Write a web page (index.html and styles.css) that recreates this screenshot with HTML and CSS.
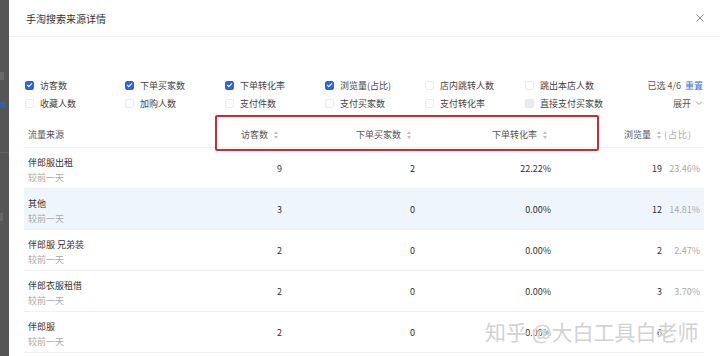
FILE: index.html
```html
<!DOCTYPE html>
<html lang="zh-CN">
  <head>
    <meta charset="UTF-8" />
    <meta name="viewport" content="width=device-width, initial-scale=1.0" />
    <title>手淘搜索来源详情</title>
    <link rel="stylesheet" href="styles.css">
  </head>
  <body>
    <div class="backdrop">
      <span class="bd-text"></span>
      <span class="bd-check"></span>
      <span class="bd-line"></span>
      <span class="bd-text bd-low"></span>
    </div>

    <div class="drawer">
      <div class="drawer-header">
        <span class="drawer-title">手淘搜索来源详情</span>
        <svg class="close-btn" width="8" height="8" viewBox="0 0 8 8"><path d="M0.5 0.5 L7.5 7.5 M7.5 0.5 L0.5 7.5" stroke="#8a8a8a" stroke-width="1"/></svg>
      </div>

      <div class="filters">
        <div class="filter-grid">
          <label class="check"><span class="box on"></span>访客数</label>
          <label class="check"><span class="box on"></span>下单买家数</label>
          <label class="check"><span class="box on"></span>下单转化率</label>
          <label class="check"><span class="box on"></span>浏览量(占比)</label>
          <label class="check"><span class="box"></span>店内跳转人数</label>
          <label class="check"><span class="box"></span>跳出本店人数</label>
          <label class="check"><span class="box"></span>收藏人数</label>
          <label class="check"><span class="box"></span>加购人数</label>
          <label class="check"><span class="box"></span>支付件数</label>
          <label class="check"><span class="box"></span>支付买家数</label>
          <label class="check"><span class="box"></span>支付转化率</label>
          <label class="check"><span class="box disabled"></span>直接支付买家数</label>
        </div>
        <div class="filter-side">
          <div class="picked">已选 4/6 <a class="link">重置</a></div>
          <div class="expand">展开
            <svg width="8" height="6" viewBox="0 0 8 6"><path d="M1 1.5 L4 4.5 L7 1.5" fill="none" stroke="#999" stroke-width="1"/></svg>
          </div>
        </div>
      </div>

      <div class="data-table">
        <div class="tr head">
          <div class="td name">流量来源</div>
          <div class="td num">访客数 <span class="sorter"></span></div>
          <div class="td num">下单买家数 <span class="sorter"></span></div>
          <div class="td num">下单转化率 <span class="sorter"></span></div>
          <div class="td num">浏览量 <span class="sorter"></span><span class="pct head-pct">(占比)</span></div>
        </div>

        <div class="tr">
          <div class="td name"><div>伴郎服出租</div><div class="sub">较前一天</div></div>
          <div class="td num">9</div>
          <div class="td num">2</div>
          <div class="td num">22.22%</div>
          <div class="td num">19<span class="pct">23.46%</span></div>
        </div>
        <div class="tr hover">
          <div class="td name"><div>其他</div><div class="sub">较前一天</div></div>
          <div class="td num">3</div>
          <div class="td num">0</div>
          <div class="td num">0.00%</div>
          <div class="td num">12<span class="pct">14.81%</span></div>
        </div>
        <div class="tr">
          <div class="td name"><div>伴郎服 兄弟装</div><div class="sub">较前一天</div></div>
          <div class="td num">2</div>
          <div class="td num">0</div>
          <div class="td num">0.00%</div>
          <div class="td num">2<span class="pct">2.47%</span></div>
        </div>
        <div class="tr">
          <div class="td name"><div>伴郎衣服租借</div><div class="sub">较前一天</div></div>
          <div class="td num">2</div>
          <div class="td num">0</div>
          <div class="td num">0.00%</div>
          <div class="td num">3<span class="pct">3.70%</span></div>
        </div>
        <div class="tr">
          <div class="td name"><div>伴郎服</div><div class="sub">较前一天</div></div>
          <div class="td num">2</div>
          <div class="td num">0</div>
          <div class="td num">0.00%</div>
          <div class="td num">6<span class="pct"></span></div>
        </div>
      </div>

      <!-- annotation drawn over the sortable headers -->
      <div class="mark-box"></div>
      <div class="watermark">知乎 @大白工具白老师</div>
    </div>
  </body>
</html>
```

FILE: styles.css
```css
* {
  margin: 0;
  padding: 0;
  box-sizing: border-box;
}

body {
  display: flex;
  height: 356px;
  overflow: hidden;
  background-color: #fff;
  font-family: "Noto Sans CJK SC", "Noto Sans", sans-serif;
  color: #333;
  font-size: 9px;
}

.backdrop {
  width: 9px;
  background-color: #555;
  display: flex;
  flex-direction: column;
}

.bd-text {
  margin-top: 72px;
  width: 4px;
  height: 8px;
  background-color: #686868;
}

.bd-check {
  margin-top: 22px;
  width: 6px;
  height: 6px;
  background-color: #3b5f9e;
}

.bd-line {
  margin-top: 44px;
  height: 1px;
  background-color: #646464;
}

.bd-low {
  margin-top: 60px;
  width: 3px;
}

.drawer {
  flex: 1;
  position: relative;
  background-color: #fff;
}

.drawer-header {
  height: 37px;
  border-bottom: 1px solid #f0f0f0;
  display: flex;
  align-items: center;
  justify-content: space-between;
  padding: 0 16px 0 17px;
}

.drawer-title {
  font-size: 10px;
  color: #333;
}

.filters {
  display: flex;
  padding: 39px 17px 0 16px;
}

.filter-grid {
  display: grid;
  grid-template-columns: repeat(6, 100px);
  grid-auto-rows: 18px;
}

.check {
  display: flex;
  align-items: center;
  gap: 6px;
  color: #444;
  white-space: nowrap;
}

.box {
  width: 9px;
  height: 9px;
  border: 1px solid #ececec;
  border-radius: 2px;
  background-color: #fff;
  position: relative;
}

.box.on {
  background-color: #2f66d4;
  border-color: #2f66d4;
}

.box.on::after {
  content: "";
  position: absolute;
  left: 2px;
  top: 0px;
  width: 2px;
  height: 4px;
  border: solid #fff;
  border-width: 0 1px 1px 0;
  transform: rotate(45deg);
}

.box.disabled {
  background-color: #ebebeb;
  border-color: #e6e6e6;
}

.filter-side {
  margin-left: auto;
  display: flex;
  flex-direction: column;
  align-items: flex-end;
}

.picked, .expand {
  height: 18px;
  display: flex;
  align-items: center;
  gap: 4px;
  color: #555;
}

.link {
  color: #3b6fd6;
}

.data-table {
  margin: 10px 16px 0 15px;
}

.tr {
  display: grid;
  grid-template-columns: 124px 134px 133px 136px 1fr;
  padding-right: 4px;
  height: 41px;
  border-bottom: 1px solid #f0f0f0;
  align-items: center;
}

.tr.head {
  height: 26px;
  color: #555;
}

.tr.hover {
  background-color: #eef5fc;
}

.td.name {
  padding-left: 4px;
  padding-top: 3px;
  line-height: 15px;
}

.head .td.name {
  padding-top: 0;
}

.sub {
  color: #aaa;
}

.td.num {
  display: flex;
  align-items: center;
  justify-content: flex-end;
}

.head .td.num {
  padding-right: 3px;
}

.head .td.num:last-child {
  padding-right: 0;
}

.sorter {
  width: 5px;
  height: 8px;
  margin-left: 6px;
  position: relative;
}

.sorter::before, .sorter::after {
  content: "";
  position: absolute;
  left: 0;
  border-left: 2.5px solid transparent;
  border-right: 2.5px solid transparent;
}

.sorter::before {
  top: 0;
  border-bottom: 3px solid #c0c0c0;
}

.sorter::after {
  bottom: 0;
  border-top: 3px solid #c0c0c0;
}

.pct {
  width: 33px;
  margin-left: 5px;
  text-align: right;
  color: #aaa;
}

.head-pct {
  margin-left: 2px;
  width: 36px;
  text-align: left;
  letter-spacing: 1px;
}

.mark-box {
  position: absolute;
  left: 206px;
  top: 115px;
  width: 384px;
  height: 36px;
  border: 2px solid #d6262e;
  border-radius: 2px;
}

.watermark {
  position: absolute;
  left: 476px;
  top: 316px;
  font-size: 21px;
  color: #d2d2d2;
  white-space: nowrap;
  text-shadow: 0 0 2px #fff, 0 0 1px #fff;
}
```
